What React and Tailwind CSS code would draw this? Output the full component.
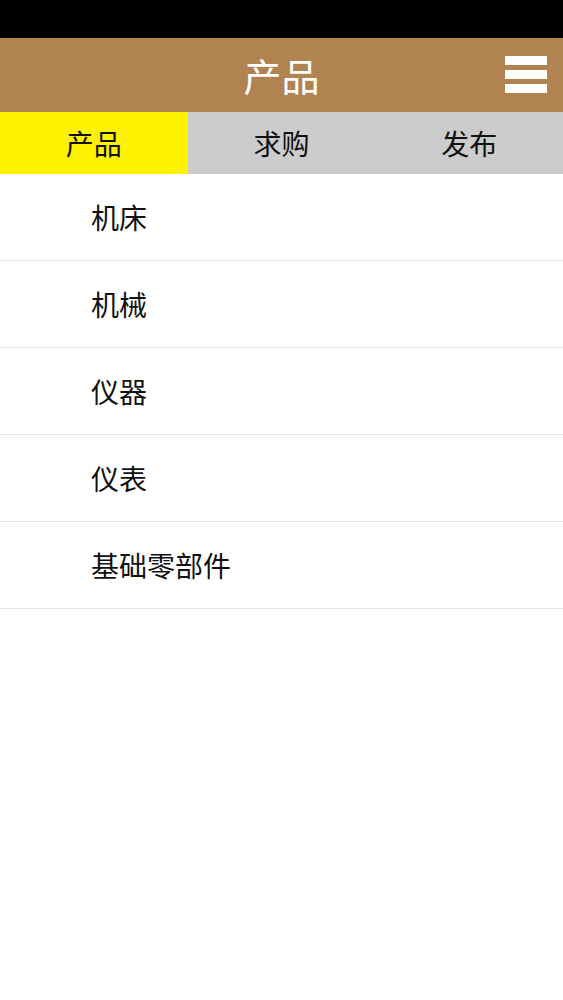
import { useState } from "react";

const tabs = ["产品", "求购", "发布"];
const items = ["机床", "机械", "仪器", "仪表", "基础零部件"];

export default function App() {
  const [active, setActive] = useState(0);

  return (
    <div
      className="min-h-[1000px] bg-white"
      style={{ fontFamily: '"Noto Sans CJK SC", "Noto Sans", sans-serif' }}
    >
      {/* status bar */}
      <div className="h-[38px] bg-black" />

      {/* header */}
      <header className="relative flex h-[74px] items-center justify-center bg-[#b08350]">
        <h1 className="text-[38px] leading-none text-white">产品</h1>
        <button className="absolute right-[16px] top-[18px] flex w-[42px] flex-col gap-[5px]">
          <span className="block h-[9px] w-full bg-white" />
          <span className="block h-[9px] w-full bg-white" />
          <span className="block h-[9px] w-full bg-white" />
        </button>
      </header>

      {/* tabs */}
      <nav className="grid h-[62px] grid-cols-3 bg-[#cccccc]">
        {tabs.map((t, i) => (
          <button
            key={t}
            onClick={() => setActive(i)}
            className={
              "flex items-center justify-center text-[28px] leading-none text-[#111] " +
              (active === i ? "bg-[#fff200]" : "bg-[#cccccc]")
            }
          >
            {t}
          </button>
        ))}
      </nav>

      {/* list */}
      <ul>
        {items.map((it) => (
          <li
            key={it}
            className="flex h-[87px] items-center border-b border-[#e8e8e8] pl-[91px] text-[28px] leading-none text-[#111]"
          >
            {it}
          </li>
        ))}
      </ul>
    </div>
  );
}
